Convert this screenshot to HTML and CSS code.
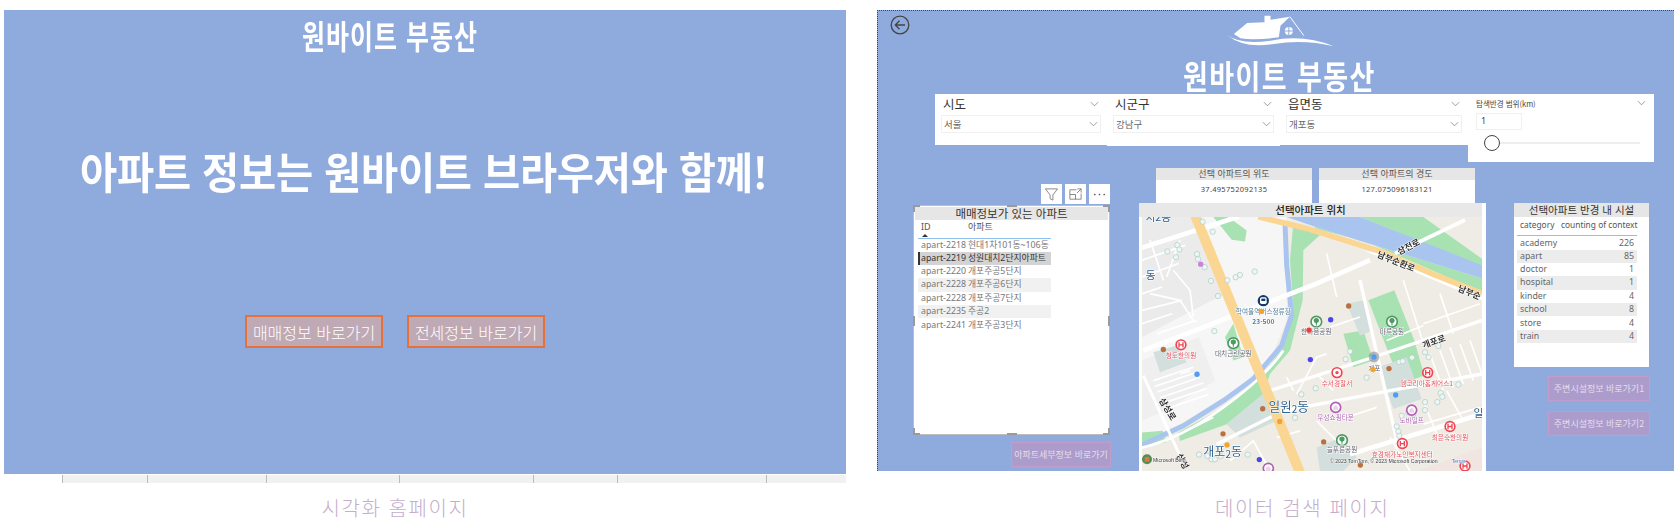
FILE: index.html
```html
<!DOCTYPE html>
<html lang="ko">
<head>
    <meta charset="UTF-8">
    <title>원바이트 부동산</title>
    <link rel="stylesheet" href="styles.css">
</head>
<body>
    <svg class="defs" width="0" height="0">
        <symbol id="chev" viewBox="0 0 10 6"><path d="M1 1l4 4 4-4" fill="none" stroke="#777" stroke-width="0.8"/></symbol>
    </svg>

    <div class="page">
        <!-- 홈페이지 -->
        <section class="shot shot-home">
            <div class="canvas canvas-home">
                <div class="brand brand-home">원바이트 부동산</div>
                <h1 class="headline">아파트 정보는 원바이트 브라우저와 함께!</h1>
                <div class="home-btns">
                    <button class="home-btn">매매정보 바로가기</button>
                    <button class="home-btn">전세정보 바로가기</button>
                </div>
            </div>
            <div class="ticks">
                <span style="width:85px"></span><span style="width:119px"></span><span style="width:133px"></span><span style="width:134px"></span><span style="width:84px"></span><span style="width:149px"></span><span style="width:80px"></span>
            </div>
            <p class="caption caption-home">시각화 홈페이지</p>
        </section>

        <!-- 검색 페이지 -->
        <section class="shot shot-search">
            <div class="canvas canvas-search">
                <svg class="back" viewBox="0 0 20 20"><circle cx="10" cy="10" r="8.8" fill="none" stroke="#444" stroke-width="1.3"/><path d="M15 10H5.5M9.5 5.8L5.3 10l4.2 4.2" fill="none" stroke="#444" stroke-width="1.3"/></svg>

                <svg class="house" viewBox="110 25 320 105">
                    <path d="M130 85L170 52l52-2V30h18v12l58-9-28 27-5 35q-75 10-115 3z" fill="#fff"/>
                    <path d="M298 33l42 57" fill="none" stroke="#fff" stroke-width="3"/>
                    <circle cx="295" cy="76" r="12" fill="#fff"/>
                    <path d="M295 64v24M283 76h24" stroke="#8faadc" stroke-width="3"/>
                    <path d="M110 88q40 30 130 17 100-20 190 17-90-22-180-7-90 15-140-27z" fill="#fff"/>
                </svg>
                <div class="brand brand-search">원바이트 부동산</div>

                <div class="filters">
                    <div class="slicer slicer-a">
                        <div class="slicer-head"><span>시도</span><svg class="chev"><use href="#chev"/></svg></div>
                        <div class="slicer-box"><span>서울</span><svg class="chev"><use href="#chev"/></svg></div>
                    </div>
                    <div class="slicer slicer-b">
                        <div class="slicer-head"><span>시군구</span><svg class="chev"><use href="#chev"/></svg></div>
                        <div class="slicer-box"><span>강남구</span><svg class="chev"><use href="#chev"/></svg></div>
                    </div>
                    <div class="slicer slicer-c">
                        <div class="slicer-head"><span>읍면동</span><svg class="chev"><use href="#chev"/></svg></div>
                        <div class="slicer-box"><span>개포동</span><svg class="chev"><use href="#chev"/></svg></div>
                    </div>
                    <div class="range">
                        <div class="range-head"><span>탐색반경 범위(km)</span><svg class="chev"><use href="#chev"/></svg></div>
                        <div class="range-input">1</div>
                        <div class="range-track"><i class="range-knob"></i></div>
                    </div>
                </div>

                <div class="report">
                    <div class="col-list">
                        <div class="tools">
                            <span class="tool"><svg viewBox="0 0 16 16"><path d="M1.5 2h13L9.5 8.5V14l-3-1.5v-4z" fill="none" stroke="#777" stroke-width=".9"/></svg></span>
                            <span class="tool"><svg viewBox="0 0 16 16"><path d="M9 3H2v10h12V7M2 8h6v5M10 2h4v4M14 2L9.5 6.5" fill="none" stroke="#777" stroke-width=".9"/></svg></span>
                            <span class="tool"><svg viewBox="0 0 16 16"><circle cx="3" cy="8" r=".9" fill="#555"/><circle cx="8" cy="8" r=".9" fill="#555"/><circle cx="13" cy="8" r=".9" fill="#555"/></svg></span>
                        </div>
                        <div class="visual list-card">
                            <div class="visual-title">매매정보가 있는 아파트</div>
                            <table class="list-table">
                                <thead><tr><th>ID<i class="sort"></i></th><th>아파트</th></tr></thead>
                                <tbody>
                                    <tr><td>apart-2218</td><td>현대1차101동~106동</td></tr>
                                    <tr class="sel"><td>apart-2219</td><td>성원대치2단지아파트</td></tr>
                                    <tr><td>apart-2220</td><td>개포주공5단지</td></tr>
                                    <tr class="alt"><td>apart-2228</td><td>개포주공6단지</td></tr>
                                    <tr><td>apart-2228</td><td>개포주공7단지</td></tr>
                                    <tr class="alt"><td>apart-2235</td><td>주공2</td></tr>
                                    <tr><td>apart-2241</td><td>개포주공3단지</td></tr>
                                </tbody>
                            </table>
                            <i class="grip g-tl"></i><i class="grip g-tr"></i><i class="grip g-bl"></i><i class="grip g-br"></i>
                            <i class="grip-bar b-t"></i><i class="grip-bar b-b"></i><i class="grip-side s-l"></i><i class="grip-side s-r"></i>
                        </div>
                        <button class="link-btn">아파트세부정보 바로가기</button>
                    </div>

                    <div class="col-map">
                        <div class="coords">
                            <div class="coord"><div class="visual-title coord-title">선택 아파트의 위도</div><div class="coord-val">37.495752092135</div></div>
                            <div class="coord"><div class="visual-title coord-title">선택 아파트의 경도</div><div class="coord-val">127.075096183121</div></div>
                        </div>
                        <div class="map-card">
                            <div class="visual-title map-title">선택아파트 위치</div>
                            <svg class="map" viewBox="36 171 1020 759" preserveAspectRatio="none">
                                <defs>
                                    <g id="pin-park"><circle r="16" fill="#fff" stroke="#4f9a63" stroke-width="5"/><path d="M-8 -3a8 8 0 0 1 16 0q0 6-6 7l-1 8h-2l-1-8q-6-1-6-7z" fill="#4f9a63"/></g>
                                    <g id="pin-hosp"><circle r="17" fill="#ef4452"/><circle r="12" fill="#fff"/><path d="M-6-8v16M6-8v16M-6 0H6" stroke="#ef4452" stroke-width="4"/></g>
                                    <g id="pin-shop"><circle r="15" fill="#fff" stroke="#b05fb4" stroke-width="5"/><path d="M-7 8v-9l7-6 7 6v9z" fill="#e8d3e8"/></g>
                                    <g id="pin-police"><circle r="17" fill="#ef4452"/><circle r="12" fill="#fff"/><circle r="5" fill="#ef4452"/></g>
                                </defs>

                                <rect x="36" y="171" width="1020" height="759" fill="#efece5"/>
                                <path d="M36 171H470V480L420 600 300 700 150 790 36 840z" fill="#f6f6f6"/>
                                <path d="M36 171H190L285 400 150 470 36 530z" fill="#ebebeb"/>
                                <path d="M36 600l170-70 50 130-150 90-70 30z" fill="#efefef"/>
                                <path d="M860 930l196-70v70z" fill="#f1e5e1"/>

                                <!-- 공원 -->
                                <g fill="#a8e2b2">
                                    <path d="M250 171h45l55 40-5 33-40-5z"/>
                                    <path d="M690 171H880L1056 296v22z"/>
                                    <path d="M555 200l501 155v45l-60-30-150-66-140-60-150-38z"/>
                                    <path d="M490 190l80 35-50 45-2 150-38 150-60 70-20 60-110 90-140 50-5-25 135-75 120-100 60-80 30-110-10-150z"/>
                                    <path d="M715 420l78-30 60 150 30 105-70 25-40-100z"/>
                                    <path d="M36 815l62-5 10 35-72 12z"/>
                                    <path d="M640 520l60-10 30 90-60 20z"/>
                                    <path d="M310 490l30 100-30 10-25-70z"/>
                                </g>
                                <g fill="#d3dfdd">
                                    <path d="M290 790l110-90 40 80-110 50z"/>
                                    <path d="M745 620l85-30 45 125-85 30z"/>
                                    <path d="M650 430l50-10 30 90-40 15z"/>
                                    <path d="M70 575l70-20 30 50-80 30z"/>
                                    <path d="M560 860l70-30 50 60-40 40-70 0z"/>
                                </g>

                                <!-- 물길 -->
                                <path d="M470 171H690L1056 315v40L555 200z" fill="#a9c5ef"/>
                                <path d="M465 190l5 125 15 150-30 90-25 30-60 70-90 65-120 75-130 60" fill="none" stroke="#a9c5ef" stroke-width="15"/>

                                <!-- 도로 -->
                                <g class="m-road" stroke-width="14">
                                    <path d="M30 265L325 170"/>
                                    <path d="M40 570L300 470 555 372 720 300"/>
                                    <path d="M795 280L1005 180" stroke-width="11"/>
                                    <path d="M690 360l115 500" stroke-width="10"/>
                                    <path d="M420 690l310-100 326-110" stroke-width="10"/>
                                    <path d="M260 850l200-100 320-60 276-50" stroke-width="10"/>
                                    <path d="M660 880l396-120" stroke-width="14"/>
                                    <path d="M40 645l110 240" stroke-width="9"/>
                                    <path d="M700 270l200 85 156 65v-22L780 285z" stroke="none" fill="#fff"/>
                                    <path d="M36 860Q150 835 280 740T460 570" stroke-width="8"/>
                                </g>
                                <g class="m-road" stroke-width="5">
                                    <path d="M70 660l120-40M75 677l125-42M82 694l128-44M90 711l130-44M98 728l130-44M106 745l130-44"/>
                                    <path d="M36 300l130-45M36 350l110-40M60 400l90 20 40 60M36 450l120-30M80 520l120-40M130 330l50 60 10 80M60 240l40 120M150 240l-40 110M36 400l60-20M36 490l90-30"/>
                                    <path d="M820 360l60 190M930 400l40 120M690 470l-90 30M590 280l30 130M770 540l110-45M880 490l170-60"/>
                                    <path d="M900 580l40 110M930 570l40 110M960 560l40 110M990 550l40 110M1020 540l36 100"/>
                                    <path d="M500 700l60-110 30-10M470 650l20 40M560 640l50 50M620 780l120-40M780 830l60 100M880 720l40 100M950 690l50 90"/>
                                    <path d="M300 900l70-60 50 90M440 830l70-20M560 780l60 60M150 640l30-10M190 800l60-30M880 790l170-50M860 820l190-55"/>
                                </g>

                                <path d="M385 170L530 205 755 275 905 340 1056 400" fill="none" stroke="#fbd592" stroke-width="17"/>
                                <path d="M195 165L510 935" fill="none" stroke="#fbd592" stroke-width="30"/>

                                <!-- 옅은 점 -->
                                <g class="m-pale">
                                    <circle cx="218" cy="185"/><circle cx="248" cy="215"/><circle cx="112" cy="274"/><circle cx="142" cy="255"/><circle cx="148" cy="268"/><circle cx="138" cy="291"/><circle cx="201" cy="282"/><circle cx="204" cy="297"/><circle cx="224" cy="321"/><circle cx="243" cy="362"/><circle cx="292" cy="360"/><circle cx="317" cy="351"/><circle cx="330" cy="344"/><circle cx="374" cy="334"/><circle cx="264" cy="407"/><circle cx="253" cy="512"/>
                                    <circle cx="660" cy="573"/><circle cx="647" cy="596"/><circle cx="710" cy="651"/><circle cx="557" cy="683"/><circle cx="514" cy="701"/><circle cx="495" cy="771"/><circle cx="808" cy="604"/><circle cx="818" cy="602"/><circle cx="846" cy="591"/><circle cx="885" cy="575"/><circle cx="896" cy="590"/><circle cx="925" cy="556"/><circle cx="932" cy="697"/><circle cx="937" cy="708"/><circle cx="885" cy="724"/><circle cx="885" cy="748"/><circle cx="922" cy="724"/>
                                    <circle cx="815" cy="765"/><circle cx="835" cy="755"/><circle cx="845" cy="745"/><circle cx="850" cy="760"/><circle cx="800" cy="797"/><circle cx="805" cy="812"/><circle cx="808" cy="825"/><circle cx="353" cy="881"/><circle cx="207" cy="881"/><circle cx="232" cy="885"/><circle cx="245" cy="895"/><circle cx="255" cy="895"/><circle cx="272" cy="885"/><circle cx="985" cy="672"/>
                                </g>

                                <!-- 지명 -->
                                <g class="m-label m-place">
                                    <text x="476" y="750" font-size="38">일원<tspan font-size="30" dy="6">2</tspan><tspan dy="-6">동</tspan></text>
                                    <text x="278" y="884" font-size="36">개포<tspan font-size="30" dy="6">2</tspan><tspan dy="-6">동</tspan></text>
                                    <text x="62" y="356" font-size="32">동</text>
                                    <text x="85" y="184" font-size="32">치2동</text>
                                    <text x="1045" y="768" font-size="32">일</text>
                                </g>
                                <g class="m-label m-road-name">
                                    <text transform="translate(795 312) rotate(22)">남부순환로</text>
                                    <text transform="translate(840 268) rotate(-27)">삼전로</text>
                                    <text transform="translate(1015 405) rotate(22)">남부순</text>
                                    <text transform="translate(915 552) rotate(-20)">개포로</text>
                                    <text transform="translate(105 750) rotate(58)">삼성로</text>
                                    <text transform="translate(150 905) rotate(62)">삼성</text>
                                </g>

                                <!-- 표식 -->
                                <circle cx="400" cy="421" r="17" fill="#123a6a"/>
                                <rect x="390" y="411" width="20" height="20" rx="5" fill="#fff"/>
                                <rect x="394" y="415" width="12" height="7" fill="#123a6a"/>
                                <use href="#pin-park" x="559" y="484"/><use href="#pin-park" x="786" y="484"/><use href="#pin-park" x="310" y="548"/><use href="#pin-park" x="636" y="838"/>
                                <use href="#pin-hosp" x="153" y="553"/><use href="#pin-hosp" x="817" y="848"/><use href="#pin-hosp" x="960" y="797"/><use href="#pin-hosp" x="893" y="636"/><use href="#pin-hosp" x="1005" y="915"/>
                                <use href="#pin-police" x="621" y="636"/>
                                <use href="#pin-shop" x="617" y="740"/><use href="#pin-shop" x="845" y="748"/><use href="#pin-shop" x="415" y="922"/>

                                <g class="m-label m-poi">
                                    <text class="m-bus" x="400" y="461">학여울역버스정류장</text>
                                    <text class="m-bus m-bold" x="400" y="491">23-500</text>
                                    <text class="m-gray" x="559" y="522">한마음공원</text>
                                    <text class="m-gray" x="786" y="522">마루공원</text>
                                    <text class="m-gray" x="310" y="586">대치근린공원</text>
                                    <text class="m-gray" x="636" y="874">늘푸른공원</text>
                                    <text class="m-gray" x="733" y="630">개포</text>
                                    <text class="m-red" x="153" y="593">청도한의원</text>
                                    <text class="m-red" x="817" y="887">효경재가노인복지센터</text>
                                    <text class="m-red" x="960" y="836">최은숙한의원</text>
                                    <text class="m-red" x="890" y="676">엠코리아홈케어스1</text>
                                    <text class="m-red" x="621" y="675">수서경찰서</text>
                                    <text class="m-pur" x="617" y="779">우성쇼핑타운</text>
                                    <text class="m-pur" x="845" y="787">노바일프</text>
                                </g>

                                <!-- 데이터 점 -->
                                <g class="m-dot" fill="#b9713f">
                                    <circle cx="656" cy="437"/><circle cx="100" cy="567"/><circle cx="777" cy="624"/><circle cx="398" cy="744"/><circle cx="279" cy="819"/><circle cx="581" cy="843"/><circle cx="691" cy="912"/>
                                </g>
                                <g class="m-dot" fill="#f2a52a">
                                    <circle cx="394" cy="453"/><circle cx="729" cy="627"/><circle cx="449" cy="782"/><circle cx="291" cy="852"/>
                                </g>
                                <circle cx="732" cy="589" r="16" fill="#9a9a9a" opacity=".7"/>
                                <g class="m-dot" fill="#4f9cf5">
                                    <circle cx="201" cy="641"/><circle cx="797" cy="703"/><circle cx="732" cy="589"/>
                                </g>
                                <g class="m-dot" fill="#4a45e8">
                                    <circle cx="602" cy="478"/><circle cx="541" cy="597"/><circle cx="388" cy="896"/>
                                </g>
                                <circle class="m-dot" cx="537" cy="509" fill="#ee3b3b"/>
                                <circle class="m-dot" cx="212" cy="312" fill="#cf80de"/>

                                <!-- 저작권 -->
                                <circle cx="51" cy="895" r="15" fill="#4f8f58"/>
                                <rect x="44" y="888" width="14" height="14" fill="#e8743b"/>
                                <text class="m-credit" x="69" y="903">Microsoft Bing</text>
                                <text class="m-credit" x="600" y="907">© 2023 TomTom, © 2023 Microsoft Corporation</text>
                                <text class="m-credit m-terms" x="965" y="907">Terms</text>
                            </svg>
                        </div>
                    </div>

                    <div class="col-side">
                        <div class="visual side-card">
                            <div class="visual-title side-title">선택아파트 반경 내 시설</div>
                            <table class="side-table">
                                <thead><tr><th>category</th><th>counting of context</th></tr></thead>
                                <tbody>
                                    <tr><td>academy</td><td>226</td></tr>
                                    <tr class="alt"><td>apart</td><td>85</td></tr>
                                    <tr><td>doctor</td><td>1</td></tr>
                                    <tr class="alt"><td>hospital</td><td>1</td></tr>
                                    <tr><td>kinder</td><td>4</td></tr>
                                    <tr class="alt"><td>school</td><td>8</td></tr>
                                    <tr><td>store</td><td>4</td></tr>
                                    <tr class="alt"><td>train</td><td>4</td></tr>
                                </tbody>
                            </table>
                        </div>
                        <button class="link-btn side-btn">주변시설정보 바로가기1</button>
                        <button class="link-btn side-btn">주변시설정보 바로가기2</button>
                    </div>
                </div>
            </div>
            <p class="caption caption-search">데이터 검색 페이지</p>
        </section>
    </div>
</body>
</html>
```

FILE: styles.css
```css
:root {
    --panel: #8faadc;
    --kr: "Noto Sans CJK KR", sans-serif;
    --ui: "Noto Sans", "Noto Sans CJK KR", sans-serif;
}

* {
    box-sizing: border-box;
}

body {
    margin: 0;
    background: #fff;
    font-family: var(--kr);
    overflow: hidden;
}

.defs {
    position: absolute;
}

.page {
    display: flex;
    padding-top: 10px;
    height: 526px;
}

.shot-home {
    width: 842px;
    margin-left: 4px;
}

.shot-search {
    width: 797px;
    margin-left: 31px;
}

.canvas {
    background: var(--panel);
    height: 461px;
}

.canvas-home {
    height: 464px;
    padding-top: 8px;
}

.caption {
    margin: 0;
    font-size: 20px;
    line-height: 28px;
    font-weight: 300;
    letter-spacing: 1.6px;
    color: #c4aecb;
    text-align: center;
}

.caption-home {
    margin-top: 11px;
    width: 782px;
}

.caption-search {
    margin-top: 23px;
    padding-left: 338px;
    text-align: left;
}

/* 홈 */
.brand {
    color: #fff;
    font-weight: 700;
    white-space: nowrap;
}

.brand-home {
    width: max-content;
    margin: 0 0 0 298px;
    font-size: 25px;
    line-height: 34px;
    letter-spacing: 1px;
    transform: scaleY(1.3);
}

.headline {
    margin: 91px 0 0 76px;
    font-size: 40.4px;
    line-height: 56px;
    font-weight: 700;
    color: #fff;
    letter-spacing: -0.2px;
    white-space: nowrap;
    transform: scaleY(1.08);
}

.home-btns {
    display: flex;
    gap: 24px;
    margin: 116px 0 0 241px;
}

.home-btn {
    width: 138px;
    height: 33px;
    padding: 0;
    border: 2px solid #e4703a;
    background: #bfa9b4;
    color: #fff;
    font-family: var(--kr);
    font-size: 16px;
    font-weight: 300;
}

.ticks {
    display: flex;
    height: 8px;
    margin: 1px 0 0 58px;
    background: #f1f1f1;
}

.ticks span {
    border-left: 1px solid #bbb;
}

/* 검색 */
.canvas-search {
    position: relative;
    overflow: hidden;
    border-top: 1px dotted #444;
    border-left: 1px dotted #444;
}

.back {
    position: absolute;
    top: 4px;
    left: 12px;
    width: 20px;
    height: 20px;
}

.house {
    display: block;
    width: 107px;
    height: 35px;
    margin: 3px 0 0 349px;
}

.brand-search {
    width: max-content;
    margin: 12px 0 3px 305px;
    font-size: 27px;
    line-height: 30px;
    height: 30px;
    letter-spacing: 1.4px;
    transform: scaleY(1.2);
}

.filters {
    display: flex;
    align-items: flex-start;
    margin-left: 57px;
}

.slicer {
    background: #fff;
    height: 51px;
    padding: 2px 6px 0;
}

.slicer-a { width: 172px; }
.slicer-b { width: 173px; height: 52px; }
.slicer-c { width: 188px; }

.slicer-head,
.slicer-box,
.range-head {
    display: flex;
    justify-content: space-between;
    align-items: center;
}

.slicer-head {
    height: 15px;
    font-size: 12.5px;
    color: #333;
    padding: 0 2px;
}

.slicer-box {
    height: 18px;
    margin-top: 4px;
    border: 1px solid #f0f0f0;
    padding: 0 2px 0 2px;
    font-size: 9.5px;
    color: #666;
}

.chev {
    width: 9px;
    height: 6px;
}

.range {
    width: 186px;
    height: 68px;
    background: #fff;
    padding: 5px 8px 0;
}

.range-head {
    font-size: 7.5px;
    color: #444;
    height: 8px;
}

.range-input {
    width: 46px;
    height: 17px;
    margin-top: 6px;
    border: 1px solid #f0f0f0;
    padding: 0 4px;
    font: 9px/14px var(--ui);
    color: #444;
}

.range-track {
    position: relative;
    height: 2px;
    margin: 12px 6px 0 8px;
    background: #eee;
}

.range-knob {
    position: absolute;
    top: -7px;
    left: 0;
    width: 16px;
    height: 16px;
    border: 1px solid #444;
    border-radius: 50%;
    background: #fff;
}

.report {
    display: flex;
    margin-left: 35px;
}

.visual {
    position: relative;
    background: #fff;
}

.visual-title {
    background: #e6e6e6;
    color: #333;
    text-align: center;
    white-space: nowrap;
}

.col-list {
    display: flex;
    flex-direction: column;
    width: 198px;
    padding-top: 22px;
    margin-right: 28px;
}

.tools {
    display: flex;
    justify-content: flex-end;
    gap: 3px;
    padding-right: 1px;
    margin-bottom: 1px;
}

.tool {
    display: flex;
    align-items: center;
    justify-content: center;
    width: 21px;
    height: 20px;
    background: #fff;
}

.tool svg {
    width: 15px;
    height: 15px;
}

.list-card {
    width: 197px;
    height: 230px;
    border: 1px solid #bdbdbd;
    padding: 1px;
}

.list-card .visual-title {
    height: 13px;
    font-size: 11.5px;
    line-height: 13px;
}

.list-table,
.side-table {
    border-collapse: collapse;
    font-family: var(--ui);
    color: #666;
}

.list-table {
    margin: 0 0 0 3px;
    width: 133px;
    font-size: 8.8px;
    color: #777;
    table-layout: fixed;
}

.list-table th {
    position: relative;
    height: 18px;
    padding: 0 0 4px 3px;
    font-weight: 400;
    font-size: 9px;
    color: #555;
    text-align: left;
    border-bottom: 1px solid #8ec1f0;
}

.list-table th:first-child,
.list-table td:first-child {
    width: 47px;
}

.sort {
    position: absolute;
    left: 4px;
    bottom: 1px;
    border: 3px solid transparent;
    border-top: 0;
    border-bottom: 3px solid #333;
}

.list-table td,
.side-table td {
    height: 13.4px;
    padding: 0 0 0 3px;
    line-height: 13px;
    white-space: nowrap;
}

.list-table .alt td {
    background: #f1f1f1;
}

.list-table .sel td {
    background: #d3d3d3;
    color: #333;
}

.list-table .sel td:first-child {
    box-shadow: inset 2px 0 0 #333;
}

.grip,
.grip-bar,
.grip-side {
    position: absolute;
    background: #9a9a9a;
}

.grip {
    width: 7px;
    height: 7px;
    background: none;
    border: 0 solid #9a9a9a;
}

.g-tl { top: -1px; left: -1px; border-width: 2px 0 0 2px; }
.g-tr { top: -1px; right: -1px; border-width: 2px 2px 0 0; }
.g-bl { bottom: -1px; left: -1px; border-width: 0 0 2px 2px; }
.g-br { bottom: -1px; right: -1px; border-width: 0 2px 2px 0; }

.grip-bar {
    left: 93px;
    width: 10px;
    height: 2px;
}

.b-t { top: -1px; }
.b-b { bottom: -1px; }

.grip-side {
    top: 110px;
    width: 2px;
    height: 10px;
}

.s-l { left: -1px; }
.s-r { right: -1px; }

.link-btn {
    width: 100px;
    height: 25px;
    padding: 0;
    border: 1px solid #c29dcb;
    background: #ab9ccb;
    color: #e6dcee;
    font-family: var(--kr);
    font-size: 9px;
    white-space: nowrap;
}

.col-list .link-btn {
    margin-top: 7px;
    align-self: flex-end;
}

.col-map {
    width: 347px;
    padding-top: 6px;
    margin-right: 28px;
}

.coords {
    display: flex;
    gap: 7px;
    margin-left: 17px;
}

.coord {
    width: 156px;
    height: 35px;
    background: #fff;
}

.coord-title {
    height: 12px;
    font-size: 9px;
    line-height: 12px;
    color: #555;
}

.coord-val {
    font: 7.5px/18px var(--ui);
    color: #444;
    letter-spacing: 0.3px;
    text-align: center;
}

.map-card {
    background: #fff;
    height: 268px;
    padding-right: 4px;
}

.map-title {
    height: 14px;
    font-size: 10.5px;
    line-height: 14px;
    font-weight: 500;
    color: #222;
    background: #e8e8e8;
}

.map {
    display: block;
    width: 340px;
    height: 254px;
    margin-left: 3px;
    filter: blur(0.35px);
}

.m-road {
    fill: none;
    stroke: #fff;
}

.m-pale circle {
    r: 8px;
    fill: #eef6f4;
    stroke: #a9c9c4;
    stroke-width: 2;
}

.m-dot,
.m-dot circle {
    r: 8px;
}

.m-label text {
    font-family: var(--kr);
    paint-order: stroke;
    stroke: #fff;
    stroke-width: 3px;
}

.m-place text {
    fill: #2f6391;
    text-anchor: middle;
}

.m-road-name text {
    font-size: 26px;
    font-weight: 700;
    fill: #333;
    text-anchor: middle;
}

.m-poi text {
    font-size: 20px;
    text-anchor: middle;
}

.m-bus { fill: #4f7f9e; }
.m-bold { font-weight: 700; }
.m-gray { fill: #667; }
.m-red { fill: #e2525c; }
.m-pur { fill: #b267b6; }

.m-credit {
    font-family: "Liberation Sans", sans-serif;
    font-size: 15.5px;
    fill: #333;
    paint-order: stroke;
    stroke: #fff;
    stroke-width: 2px;
}

.m-terms {
    fill: #4a6cb8;
}

.col-side {
    display: flex;
    flex-direction: column;
    align-items: flex-end;
    width: 136px;
    padding-top: 41px;
}

.side-card {
    width: 135px;
    height: 164px;
    margin-bottom: 9px;
    align-self: flex-start;
}

.side-title {
    height: 14px;
    font-size: 10.5px;
    line-height: 14px;
}

.side-table {
    margin-left: 3px;
    width: 120px;
    font-size: 8.8px;
    table-layout: fixed;
}

.side-table th {
    height: 18px;
    padding: 0 0 3px 3px;
    font-weight: 400;
    font-size: 8.4px;
    text-align: left;
    white-space: nowrap;
    color: #555;
    border-bottom: 1px solid #8ec1f0;
}

.side-table th:first-child {
    width: 41px;
}

.side-table tbody tr:first-child td {
    padding-top: 1px;
}

.side-table td:last-child {
    text-align: right;
    padding-right: 3px;
}

.side-table .alt td {
    background: #ececec;
}

.side-btn {
    width: 102px;
    margin-bottom: 10px;
}
```
